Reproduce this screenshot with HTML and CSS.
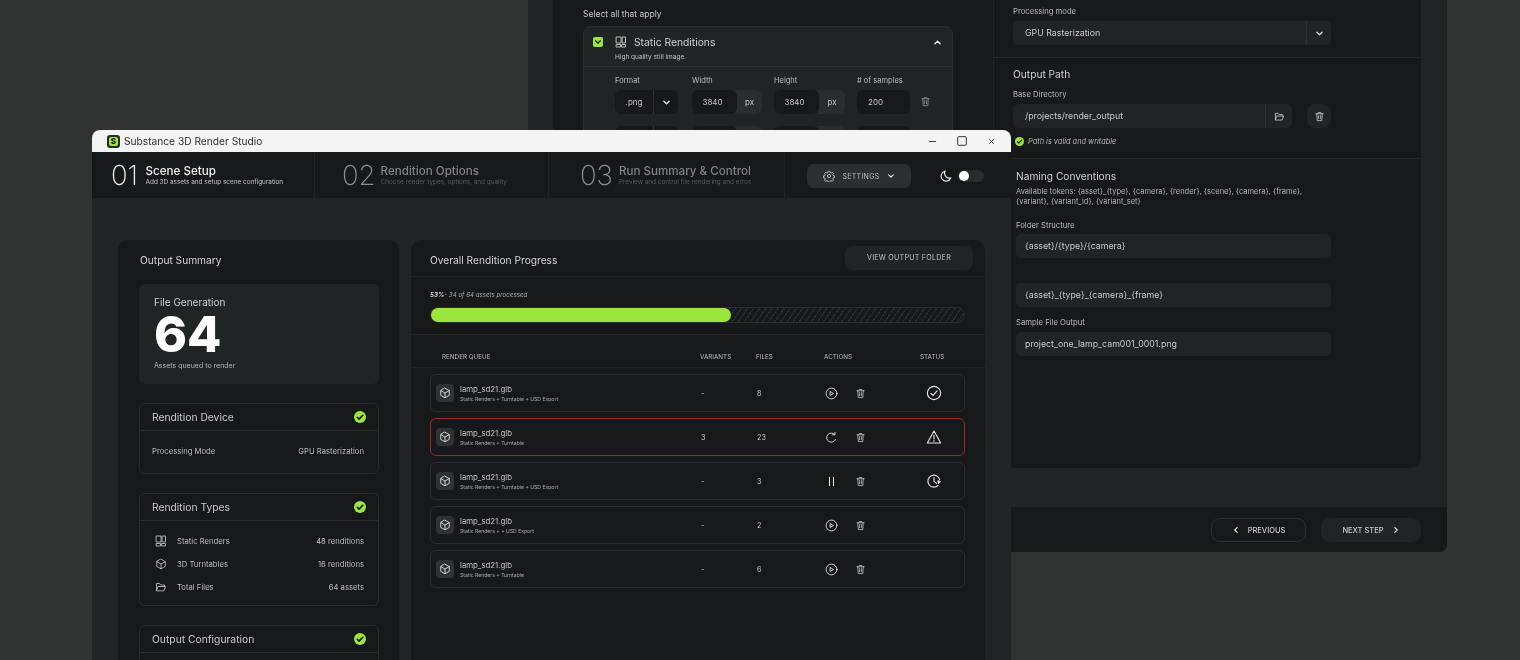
FILE: index.html
```html
<!DOCTYPE html>
<html lang="en">
<head>
    <meta charset="UTF-8">
    <meta name="viewport" content="width=device-width, initial-scale=1.0">
    <title>Substance 3D Render Studio</title>
    <link rel="stylesheet" href="styles.css">
</head>
<body>
    <!-- shared icons -->
    <svg class="icon-defs" width="0" height="0">
        <symbol id="i-cube" viewBox="0 0 24 24"><path d="M12 2.5l8.5 4.7v9.6L12 21.5l-8.5-4.7V7.2zM3.8 7.3L12 12l8.2-4.7M12 12v9.3"/></symbol>
        <symbol id="i-trash" viewBox="0 0 24 24"><path d="M4 6h16M9 6V3.5h6V6M6 6l1 15h10l1-15M10 10v7M14 10v7"/></symbol>
        <symbol id="i-play" viewBox="0 0 24 24"><circle cx="12" cy="12" r="10"/><path d="M10 8.5l5.5 3.5-5.5 3.5z"/></symbol>
        <symbol id="i-check" viewBox="0 0 24 24"><circle cx="12" cy="12" r="10"/><path d="M7.5 12.5l3 3 6-6.5"/></symbol>
        <symbol id="i-retry" viewBox="0 0 24 24"><path d="M19.5 15.5A8.5 8.5 0 1 1 18 6.5M18.5 2.5v4.5H14"/></symbol>
        <symbol id="i-warn" viewBox="0 0 24 24"><path d="M12 3L22 21H2zM12 9.5v5.5M12 17.5v.8"/></symbol>
        <symbol id="i-wait" viewBox="0 0 24 24"><path d="M20.5 10A9 9 0 1 0 18 18.7M12 7v5.5l4 3M18 11.5l3.5 1.5-3 2.5z"/></symbol>
        <symbol id="i-folder" viewBox="0 0 24 24"><path d="M3 19V5h6l2 3h8v3M3 19l3-8h15l-3 8z"/></symbol>
        <symbol id="i-static" viewBox="0 0 24 24"><path d="M3 2h9v12H3zM15 2h6v12h-6zM3 17h8v5H3zM14 17h7v5h-7z"/></symbol>
        <symbol id="i-down" viewBox="0 0 24 24"><path d="M5 8.5l7 7 7-7"/></symbol>
        <symbol id="i-up" viewBox="0 0 24 24"><path d="M5 15.5l7-7 7 7"/></symbol>
        <symbol id="i-left" viewBox="0 0 24 24"><path d="M15.5 5l-7 7 7 7"/></symbol>
        <symbol id="i-right" viewBox="0 0 24 24"><path d="M8.5 5l7 7-7 7"/></symbol>
        <symbol id="i-ok" viewBox="0 0 24 24"><circle class="ok-disc" cx="12" cy="12" r="12"/><path class="ok-tick" d="M6.5 12.5l3.7 3.7 7.3-7.7"/></symbol>
    </svg>

    <!-- window behind -->
    <section class="win-back">
        <div class="back-body">
            <div class="back-panel">
                <div class="back-left">
                    <p class="select-note">Select all that apply</p>
                    <div class="type-card">
                        <div class="type-head">
                            <div class="type-line">
                                <span class="checkbox"><svg class="ic tick"><use href="#i-down"/></svg></span>
                                <svg class="ic type-icon"><use href="#i-static"/></svg>
                                <span class="type-title">Static Renditions</span>
                                <svg class="ic type-up"><use href="#i-up"/></svg>
                            </div>
                            <p class="type-sub">High quality still image.</p>
                        </div>
                        <div class="type-fields">
                            <div class="field">
                                <label>Format</label>
                                <div class="format-box"><span class="format-val">.png</span><span class="format-arrow"><svg class="ic chev"><use href="#i-down"/></svg></span></div>
                            </div>
                            <div class="field">
                                <label>Width</label>
                                <div class="unit-box"><span class="unit-val">3840</span><span class="unit-px">px</span></div>
                            </div>
                            <div class="field field-height">
                                <label>Height</label>
                                <div class="unit-box"><span class="unit-val">3840</span><span class="unit-px">px</span></div>
                            </div>
                            <div class="field field-samples">
                                <label># of samples</label>
                                <div class="samples-box">200</div>
                            </div>
                            <svg class="ic field-trash"><use href="#i-trash"/></svg>
                        </div>
                        <!-- next row, mostly under the main window -->
                        <div class="type-fields type-fields-next">
                            <div class="field"><div class="format-box"><span class="format-val"></span></div></div>
                            <div class="field"><div class="unit-box"><span class="unit-val"></span></div></div>
                            <div class="field field-height"><div class="unit-box"><span class="unit-val"></span></div></div>
                            <div class="field field-samples"><div class="samples-box"></div></div>
                        </div>
                    </div>
                </div>
                <div class="back-right">
                    <div class="form-block block-mode">
                        <label class="form-label">Processing mode</label>
                        <div class="input input-split"><span class="input-val">GPU Rasterization</span><span class="input-end"><svg class="ic chev"><use href="#i-down"/></svg></span></div>
                    </div>
                    <div class="form-block block-path">
                        <h3 class="form-title">Output Path</h3>
                        <label class="form-label">Base Directory</label>
                        <div class="path-row">
                            <div class="input input-split input-path"><span class="input-val">/projects/render_output</span><span class="input-end"><svg class="ic folder"><use href="#i-folder"/></svg></span></div>
                            <span class="trash-btn"><svg class="ic folder"><use href="#i-trash"/></svg></span>
                        </div>
                        <p class="valid-note"><svg class="ic ok ok-small"><use href="#i-ok"/></svg>Path is valid and writable</p>
                    </div>
                    <div class="form-block block-naming">
                        <h3 class="form-title">Naming Conventions</h3>
                        <p class="tokens">Available tokens: {asset}_{type}, {camera}, {render}, {scene}, {camera}, {frame},<br>{variant}, {variant_id}, {variant_set}</p>
                        <label class="form-label label-folder">Folder Structure</label>
                        <div class="input input-folder"><span class="input-val">{asset}/{type}/{camera}</span></div>
                        <div class="input input-gap"><span class="input-val">{asset}_{type}_{camera}_{frame}</span></div>
                        <label class="form-label label-sample">Sample File Output</label>
                        <div class="input"><span class="input-val">project_one_lamp_cam001_0001.png</span></div>
                    </div>
                </div>
            </div>
        </div>
        <div class="back-footer">
            <span class="nav-btn nav-prev"><svg class="ic nav-ic"><use href="#i-left"/></svg>PREVIOUS</span>
            <span class="nav-btn nav-next">NEXT STEP<svg class="ic nav-ic"><use href="#i-right"/></svg></span>
        </div>
    </section>

    <!-- main window -->
    <section class="win-front">
        <div class="titlebar">
            <span class="logo"><span class="logo-s">S</span></span>
            <span class="app-name">Substance 3D Render Studio</span>
            <div class="win-controls">
                <svg class="ctl" viewBox="0 0 10 10"><path d="M1 5h8"/></svg>
                <svg class="ctl ctl-max" viewBox="0 0 10 10"><rect x="0.7" y="0.7" width="8.6" height="8.6" rx="1"/></svg>
                <svg class="ctl" viewBox="0 0 10 10"><path d="M2.5 2.5l5 5M7.5 2.5l-5 5"/></svg>
            </div>
        </div>

        <header class="steps">
            <div class="step step-1">
                <span class="step-num">01</span>
                <div><div class="step-title">Scene Setup</div><div class="step-sub">Add 3D assets and setup scene configuration</div></div>
            </div>
            <div class="step step-2 step-off">
                <span class="step-num">02</span>
                <div><div class="step-title">Rendition Options</div><div class="step-sub">Choose render types, options, and quality</div></div>
            </div>
            <div class="step step-3 step-off">
                <span class="step-num">03</span>
                <div><div class="step-title">Run Summary &amp; Control</div><div class="step-sub">Preview and control file rendering and erros</div></div>
            </div>
            <div class="header-tools">
                <span class="settings-btn">
                    <svg class="gear" viewBox="0 0 24 24"><circle cx="12" cy="12" r="3.2"/><path d="M10.3 2.5h3.4l.6 2.8 1.9.8 2.4-1.5 2.4 2.4-1.5 2.4.8 1.9 2.8.6v3.4l-2.8.6-.8 1.9 1.5 2.4-2.4 2.4-2.4-1.5-1.9.8-.6 2.8h-3.4l-.6-2.8-1.9-.8-2.4 1.5-2.4-2.4 1.5-2.4-.8-1.9-2.8-.6v-3.4l2.8-.6.8-1.9-1.5-2.4 2.4-2.4 2.4 1.5 1.9-.8z"/></svg>
                    SETTINGS
                    <svg class="ic settings-chev"><use href="#i-down"/></svg>
                </span>
                <svg class="moon" viewBox="0 0 24 24"><path d="M10 2.5a9.8 9.8 0 0 0 11.5 13.4A10 10 0 1 1 10 2.5z"/></svg>
                <span class="toggle"><span class="toggle-dot"></span></span>
            </div>
        </header>

        <main class="front-main">
            <aside class="card summary">
                <h2 class="card-title">Output Summary</h2>
                <div class="stat-box">
                    <div class="stat-label">File Generation</div>
                    <div class="stat-num">64</div>
                    <div class="stat-sub">Assets queued to render</div>
                </div>
                <div class="sum-box sum-device">
                    <div class="sum-head"><span>Rendition Device</span><svg class="ic ok"><use href="#i-ok"/></svg></div>
                    <div class="sum-row sum-row-device"><span>Processing Mode</span><span>GPU Rasterization</span></div>
                </div>
                <div class="sum-box sum-types">
                    <div class="sum-head"><span>Rendition Types</span><svg class="ic ok"><use href="#i-ok"/></svg></div>
                    <div class="sum-list">
                        <div class="sum-row"><svg class="ic sum-ic"><use href="#i-static"/></svg><span class="sum-name">Static Renders</span><span>48 renditions</span></div>
                        <div class="sum-row"><svg class="ic sum-ic"><use href="#i-cube"/></svg><span class="sum-name">3D Turntables</span><span>16 renditions</span></div>
                        <div class="sum-row"><svg class="ic sum-ic"><use href="#i-folder"/></svg><span class="sum-name">Total Files</span><span>64 assets</span></div>
                    </div>
                </div>
                <div class="sum-box sum-config">
                    <div class="sum-head"><span>Output Configuration</span><svg class="ic ok"><use href="#i-ok"/></svg></div>
                </div>
            </aside>

            <section class="card progress">
                <div class="progress-head">
                    <h2 class="card-title">Overall Rendition Progress</h2>
                    <span class="view-btn">VIEW OUTPUT FOLDER</span>
                </div>
                <div class="progress-body">
                    <p class="progress-note"><b>53%</b>- 34 of 64 assets processed</p>
                    <div class="bar"><div class="bar-fill" style="width: 56.3%"></div></div>
                </div>
                <div class="queue-head queue-grid">
                    <span class="q-name">RENDER QUEUE</span>
                    <span>VARIANTS</span>
                    <span>FILES</span>
                    <span>ACTIONS</span>
                    <span>STATUS</span>
                </div>
                <div class="queue">
                    <div class="queue-row queue-grid">
                        <div class="asset"><span class="chip"><svg class="ic"><use href="#i-cube"/></svg></span><div><div class="asset-name">lamp_sd21.glb</div><div class="asset-sub">Static Renders + Turntable + USD Export</div></div></div>
                        <span class="q-num">-</span><span class="q-num">8</span>
                        <div class="q-actions"><svg class="ic act"><use href="#i-play"/></svg><svg class="ic del"><use href="#i-trash"/></svg></div>
                        <svg class="ic status"><use href="#i-check"/></svg>
                    </div>
                    <div class="queue-row queue-grid row-error">
                        <div class="asset"><span class="chip"><svg class="ic"><use href="#i-cube"/></svg></span><div><div class="asset-name">lamp_sd21.glb</div><div class="asset-sub">Static Renders + Turntable</div></div></div>
                        <span class="q-num">3</span><span class="q-num">23</span>
                        <div class="q-actions"><svg class="ic act"><use href="#i-retry"/></svg><svg class="ic del"><use href="#i-trash"/></svg></div>
                        <svg class="ic status"><use href="#i-warn"/></svg>
                    </div>
                    <div class="queue-row queue-grid">
                        <div class="asset"><span class="chip"><svg class="ic"><use href="#i-cube"/></svg></span><div><div class="asset-name">lamp_sd21.glb</div><div class="asset-sub">Static Renders + Turntable + USD Export</div></div></div>
                        <span class="q-num">-</span><span class="q-num">3</span>
                        <div class="q-actions"><span class="pause"></span><svg class="ic del"><use href="#i-trash"/></svg></div>
                        <svg class="ic status"><use href="#i-wait"/></svg>
                    </div>
                    <div class="queue-row queue-grid">
                        <div class="asset"><span class="chip"><svg class="ic"><use href="#i-cube"/></svg></span><div><div class="asset-name">lamp_sd21.glb</div><div class="asset-sub">Static Renders + + USD Export</div></div></div>
                        <span class="q-num">-</span><span class="q-num">2</span>
                        <div class="q-actions"><svg class="ic act"><use href="#i-play"/></svg><svg class="ic del"><use href="#i-trash"/></svg></div>
                    </div>
                    <div class="queue-row queue-grid">
                        <div class="asset"><span class="chip"><svg class="ic"><use href="#i-cube"/></svg></span><div><div class="asset-name">lamp_sd21.glb</div><div class="asset-sub">Static Renders + Turntable</div></div></div>
                        <span class="q-num">-</span><span class="q-num">6</span>
                        <div class="q-actions"><svg class="ic act"><use href="#i-play"/></svg><svg class="ic del"><use href="#i-trash"/></svg></div>
                    </div>
                </div>
            </section>
        </main>
    </section>
</body>
</html>
```

FILE: styles.css
```css
* {
    box-sizing: border-box;
}

html, body {
    margin: 0;
    height: 660px;
    overflow: hidden;
}

body {
    position: relative;
    font-family: Inter, "Noto Sans", sans-serif;
    background: #303331;
    color: #d4d5d5;
}

p, h2, h3 {
    margin: 0;
    font-weight: 400;
}

.icon-defs {
    position: absolute;
}

.ic {
    display: block;
    fill: none;
    stroke: currentColor;
    stroke-width: 1.8;
    stroke-linecap: round;
    stroke-linejoin: round;
    overflow: visible;
}

/* ---- window behind ---- */
.win-back {
    position: absolute;
    left: 528px;
    top: 0;
    width: 919px;
    height: 552px;
    display: flex;
    flex-direction: column;
    background: #202425;
    border-radius: 0 0 8px 8px;
    overflow: hidden;
    will-change: transform;
}

.back-body {
    height: 507px;
    padding: 0 26px 0 25px;
}

.back-panel {
    display: flex;
    height: 468px;
    background: #16181a;
    border-radius: 0 0 10px 10px;
}

.back-left {
    width: 440px;
    padding: 8px 0 0 30px;
}

.select-note {
    font-size: 8.5px;
    line-height: 12px;
    color: #c9caca;
}

.type-card {
    width: 370px;
    margin-top: 6px;
    height: 130px;
    background: #202425;
    border: 1px solid #2b2f30;
    border-radius: 8px;
    overflow: hidden;
}

.type-head {
    height: 40px;
    padding: 9px 0 0 9px;
    border-bottom: 1px solid #2b2f30;
}

.type-line {
    display: flex;
    align-items: center;
    height: 12px;
}

.checkbox {
    display: flex;
    align-items: center;
    justify-content: center;
    width: 10px;
    height: 10px;
    background: #9ae63e;
    border-radius: 2px;
    color: #16181a;
}

.tick {
    width: 8px;
    height: 8px;
    stroke-width: 4;
}

.type-icon {
    width: 12px;
    height: 12px;
    margin-left: 12px;
    stroke-width: 1.7;
}

.type-title {
    margin-left: 7px;
    font-size: 10.3px;
    color: #cfd0d0;
}

.type-up {
    width: 9px;
    height: 9px;
    margin-left: auto;
    margin-right: 10px;
    stroke-width: 3.4;
    color: #eee;
}

.type-sub {
    margin: 5px 0 0 22px;
    font-size: 6.5px;
    line-height: 9px;
    color: #c0c1c1;
}

.type-fields {
    display: flex;
    align-items: flex-start;
    gap: 14px;
    padding: 8px 0 0 31px;
}

.type-fields-next {
    padding-top: 12px;
}

.field label {
    display: block;
    font-size: 7.5px;
    line-height: 11px;
    margin-bottom: 4px;
    color: #bcbdbd;
}

.format-box,
.unit-box,
.samples-box {
    display: flex;
    height: 24px;
    align-items: center;
    font-size: 8px;
    color: #c4c5c5;
    border-radius: 6px;
}

.format-box {
    width: 63px;
    background: #16181a;
}

.format-val {
    width: 39px;
    height: 24px;
    line-height: 24px;
    text-align: center;
    border-right: 1px solid #2f3233;
}

.format-arrow {
    flex: 1;
    display: flex;
    justify-content: center;
    color: #eee;
}

.chev {
    width: 9px;
    height: 9px;
    stroke-width: 3.4;
}

.unit-box {
    width: 70px;
    background: #2a2d2e;
}

.field-height {
    margin-left: -2px;
}

.field-height .unit-box {
    width: 71px;
}

.field-samples {
    margin-left: -2px;
}

.unit-val {
    width: 45px;
    height: 24px;
    padding-right: 4px;
    line-height: 24px;
    text-align: center;
    background: #16181a;
    border-radius: 6px;
}

.unit-px {
    flex: 1;
    text-align: center;
}

.samples-box {
    width: 53px;
    padding-left: 11px;
    background: #16181a;
}

.field-trash {
    width: 11px;
    height: 11px;
    margin: 21px 0 0 -4px;
    color: #8f9191;
}

.back-right {
    flex: 1;
    border-left: 1px solid #1f2223;
}

.form-block {
    padding-left: 19px;
}

.block-mode {
    height: 58px;
    padding-top: 7px;
    border-bottom: 1px solid #25282a;
}

.form-label {
    display: block;
    font-size: 7.7px;
    line-height: 10px;
    color: #b9baba;
}

.input {
    display: flex;
    align-items: center;
    width: 318px;
    height: 24px;
    margin-top: 4px;
    background: #202425;
    border-radius: 5px;
    font-size: 8.8px;
    color: #c9caca;
}

.input-val {
    flex: 1;
    padding: 0 0 1px 12px;
}

.input-end {
    display: flex;
    align-items: center;
    justify-content: center;
    width: 25px;
    height: 24px;
    border-left: 1px solid #2c3031;
    color: #ddd;
}

.block-path {
    height: 101px;
    padding-top: 10px;
    border-bottom: 1px solid #25282a;
}

.form-title {
    font-size: 10.2px;
    line-height: 13px;
    color: #cfd0d0;
}

.block-path .form-label {
    margin-top: 9px;
}

.path-row {
    display: flex;
    gap: 15px;
}

.input-path {
    width: 279px;
    border-radius: 6px;
}

.input-path .input-end {
    width: 27px;
}

.folder {
    width: 11px;
    height: 11px;
    color: #c5c6c6;
}

.trash-btn {
    display: flex;
    align-items: center;
    justify-content: center;
    width: 24px;
    height: 24px;
    margin-top: 4px;
    background: #202425;
    border-radius: 8px;
}

.valid-note {
    display: flex;
    align-items: center;
    gap: 4px;
    margin: 9px 0 0 2px;
    font-size: 7.4px;
    line-height: 10px;
    font-style: italic;
    color: #b9baba;
}

.ok-small {
    width: 9px !important;
    height: 9px !important;
}

.ok-small .ok-disc {
    fill: #6fb23a;
}

.block-naming {
    padding: 11px 0 0 22px;
}

.tokens {
    margin-top: 4px;
    font-size: 7.5px;
    line-height: 10px;
    color: #b4b5b5;
}

.block-naming .input {
    width: 315px;
}

.block-naming .input-val {
    padding-left: 9px;
}

.label-folder {
    margin-top: 14px;
}

.block-naming .input-folder {
    margin-top: 3px;
}

.block-naming .input-gap {
    margin-top: 25px;
}

.label-sample {
    margin-top: 11px;
}

.back-footer {
    flex: 1;
    display: flex;
    align-items: center;
    justify-content: flex-end;
    gap: 15px;
    padding: 1px 26px 0 0;
    background: #16181a;
}

.nav-btn {
    display: flex;
    align-items: center;
    justify-content: center;
    gap: 8px;
    height: 24px;
    font-size: 7.5px;
    font-weight: 500;
    color: #c9caca;
    border-radius: 9px;
}

.nav-prev {
    width: 95px;
    border: 1px solid #2e3132;
}

.nav-next {
    width: 100px;
    background: #202425;
}

.nav-ic {
    width: 8px;
    height: 8px;
    stroke-width: 3.6;
    color: #eee;
}

/* ---- main window ---- */
.win-front {
    position: absolute;
    left: 92px;
    top: 130px;
    width: 919px;
    height: 530px;
    display: flex;
    flex-direction: column;
    background: #202425;
    border-radius: 8px 8px 0 0;
    overflow: hidden;
    will-change: transform;
}

.titlebar {
    display: flex;
    align-items: center;
    height: 22px;
    flex: none;
    padding: 0 15px;
    background: #f4f4f4;
}

.logo {
    display: flex;
    align-items: center;
    justify-content: center;
    width: 13px;
    height: 13px;
    background: #26292a;
    border-radius: 3px;
}

.logo-s {
    width: 9px;
    height: 9px;
    background: #9ae63e;
    border-radius: 2px;
    color: #16181a;
    font-size: 8px;
    font-weight: 800;
    line-height: 9px;
    text-align: center;
}

.app-name {
    margin-left: 4px;
    font-size: 10.2px;
    color: #2c2e2f;
}

.win-controls {
    display: flex;
    align-items: center;
    gap: 20px;
    margin-left: auto;
}

.ctl {
    width: 9px;
    height: 9px;
    fill: none;
    stroke: #333;
    stroke-width: 1;
}

.ctl-max {
    width: 10px;
    height: 10px;
}

.steps {
    display: flex;
    align-items: center;
    height: 46px;
    flex: none;
    background: #16181a;
}

.step {
    display: flex;
    align-items: center;
    height: 46px;
    border-right: 1px solid #212425;
}

.step-1 {
    width: 223px;
    padding-left: 19px;
    gap: 7.5px;
}

.step-2 {
    width: 234px;
    padding-left: 27px;
    gap: 5px;
}

.step-3 {
    width: 236px;
    padding-left: 31px;
    gap: 6px;
}

.step-num {
    font-size: 27.5px;
    font-weight: 200;
    line-height: 46px;
    color: #f2f2f2;
}

.step-title {
    margin-top: 1px;
    font-size: 11.6px;
    font-weight: 500;
    line-height: 14px;
    color: #f0f0f0;
}

.step-sub {
    font-size: 6.4px;
    line-height: 9px;
    color: #c4c5c5;
}

.step-off .step-num {
    color: #8e9090;
}

.step-off .step-title {
    color: #808283;
}

.step-off .step-sub {
    color: #5a5c5d;
}

.header-tools {
    display: flex;
    align-items: center;
    margin-top: 2px;
    padding-left: 22px;
}

.settings-btn {
    display: flex;
    align-items: center;
    justify-content: center;
    width: 104px;
    height: 24px;
    background: #2c2e2f;
    border-radius: 7px;
    font-size: 7px;
    letter-spacing: 0.3px;
    color: #bbbcbc;
}

.gear {
    width: 12px;
    height: 12px;
    margin-right: 7px;
    fill: none;
    stroke: #d8d8d8;
    stroke-width: 1.6;
    stroke-linejoin: round;
}

.settings-chev {
    width: 8px;
    height: 8px;
    margin-left: 7px;
    stroke-width: 3.4;
    color: #eee;
}

.moon {
    width: 12px;
    height: 12px;
    margin-left: 29px;
    fill: none;
    stroke: #f2f2f2;
    stroke-width: 2.2;
}

.toggle {
    display: flex;
    align-items: center;
    width: 26px;
    height: 12px;
    margin-left: 6px;
    padding-left: 1px;
    background: #2a2c2d;
    border-radius: 6px;
}

.toggle-dot {
    width: 10px;
    height: 10px;
    background: #fff;
    border-radius: 50%;
}

.front-main {
    flex: 1;
    display: flex;
    gap: 12px;
    padding: 42px 26px 0;
    min-height: 0;
}

.card {
    background: #16181a;
    border-radius: 10px 10px 0 0;
}

.card-title {
    font-size: 10.2px;
    line-height: 13px;
    color: #d4d5d5;
}

/* summary column */
.summary {
    width: 281px;
    padding: 14px 20px 0 21px;
}

.summary .card-title {
    margin-left: 1px;
}

.stat-box {
    height: 100px;
    margin-top: 17px;
    padding: 12px 15px 0;
    background: #202425;
    border-radius: 6px;
}

.stat-label {
    font-size: 10px;
    line-height: 13px;
    color: #cfd0d0;
}

.stat-num {
    margin-top: 3px;
    font-size: 50px;
    font-weight: 800;
    line-height: 44px;
    color: #fff;
}

.stat-sub {
    margin-top: 5px;
    font-size: 7px;
    line-height: 10px;
    color: #b5b6b6;
}

.sum-box {
    border: 1px solid #282b2c;
    border-radius: 6px;
}

.sum-device {
    height: 71px;
    margin-top: 19px;
}

.sum-types {
    height: 113px;
    margin-top: 19px;
}

.sum-config {
    height: 60px;
    margin-top: 19px;
}

.sum-head {
    display: flex;
    align-items: center;
    justify-content: space-between;
    height: 27px;
    padding: 0 12px;
    border-bottom: 1px solid #282b2c;
    font-size: 10.3px;
    color: #c9caca;
}

.ok {
    width: 12px;
    height: 12px;
    margin-top: -1px;
}

.ok-disc {
    fill: #9ae63e;
    stroke: none;
}

.ok-tick {
    stroke: #16181a;
    stroke-width: 3.2;
}

.sum-row {
    display: flex;
    align-items: center;
    justify-content: space-between;
    padding: 0 14px 0 12px;
    font-size: 7.7px;
    color: #bcbdbd;
}

.sum-row-device {
    margin-top: 16px;
}

.sum-list {
    display: flex;
    flex-direction: column;
    gap: 11px;
    padding-top: 14px;
}

.sum-ic {
    width: 12px;
    height: 12px;
    margin-left: 3px;
    color: #d0d1d1;
    stroke-width: 1.6;
}

.sum-name {
    flex: 1;
    margin-left: 10px;
}

/* progress column */
.progress {
    width: 574px;
}

.progress-head {
    display: flex;
    align-items: center;
    justify-content: space-between;
    height: 37px;
    padding: 6px 12px 0 19px;
    border-bottom: 1px solid #232627;
}

.progress-head .card-title {
    margin-top: -1px;
}

.view-btn {
    display: flex;
    align-items: center;
    justify-content: center;
    width: 128px;
    height: 24px;
    margin-top: -7px;
    background: #202425;
    border-radius: 7px;
    font-size: 7.2px;
    letter-spacing: 0.2px;
    color: #bfc0c0;
}

.progress-body {
    height: 58px;
    padding: 13px 20px 0 19px;
    border-bottom: 1px solid #232627;
}

.progress-note {
    font-size: 6.2px;
    line-height: 9px;
    font-style: italic;
    color: #a9aaaa;
}

.progress-note b {
    color: #d8d8d8;
}

.bar {
    height: 16px;
    margin-top: 8px;
    border: 1px solid #2b2e2f;
    border-radius: 8px;
    background: repeating-linear-gradient(125deg, #16181a 0 4px, #2c2f30 4px 5px);
}

.bar-fill {
    height: 14px;
    background: #9ae63e;
    border-radius: 7px;
}

.queue-grid {
    display: grid;
    grid-template-columns: 270px 56px 68px 96px 1fr;
    align-items: center;
}

.queue-head {
    height: 33px;
    padding-top: 12px;
    padding-left: 19px;
    border-bottom: 1px solid #232627;
    font-size: 6.3px;
    color: #bcbdbd;
}

.q-name {
    padding-left: 12px;
}

.queue {
    display: flex;
    flex-direction: column;
    gap: 6px;
    padding: 6px 20px 0 19px;
}

.queue-row {
    height: 38px;
    border: 1px solid #2a2d2e;
    border-radius: 6px;
}

.row-error {
    border-color: #a82327;
}

.asset {
    display: flex;
    align-items: center;
    gap: 6px;
    padding-left: 5px;
}

.chip {
    display: flex;
    align-items: center;
    justify-content: center;
    width: 18px;
    height: 18px;
    background: #2f3133;
    border-radius: 4px;
    color: #e6e6e6;
}

.chip .ic {
    width: 12px;
    height: 12px;
    stroke-width: 1.7;
}

.asset-name {
    font-size: 7.8px;
    line-height: 11px;
    color: #c4c5c5;
}

.asset-sub {
    font-size: 5.1px;
    line-height: 8px;
    color: #a9aaaa;
}

.q-num {
    font-size: 7.2px;
    color: #c9caca;
}

.q-actions {
    display: flex;
    align-items: center;
}

.act {
    width: 13px;
    height: 13px;
    color: #e0e0e0;
    stroke-width: 1.7;
}

.pause {
    width: 5px;
    height: 9px;
    margin: 0 4px;
    border-left: 1.5px solid #f0f0f0;
    border-right: 1.5px solid #f0f0f0;
}

.del {
    width: 11px;
    height: 11px;
    margin-left: 17px;
    color: #b4b5b5;
    stroke-width: 2;
}

.status {
    width: 16px;
    height: 16px;
    margin-left: 5px;
    color: #e4e4e4;
    stroke-width: 1.7;
}
```
